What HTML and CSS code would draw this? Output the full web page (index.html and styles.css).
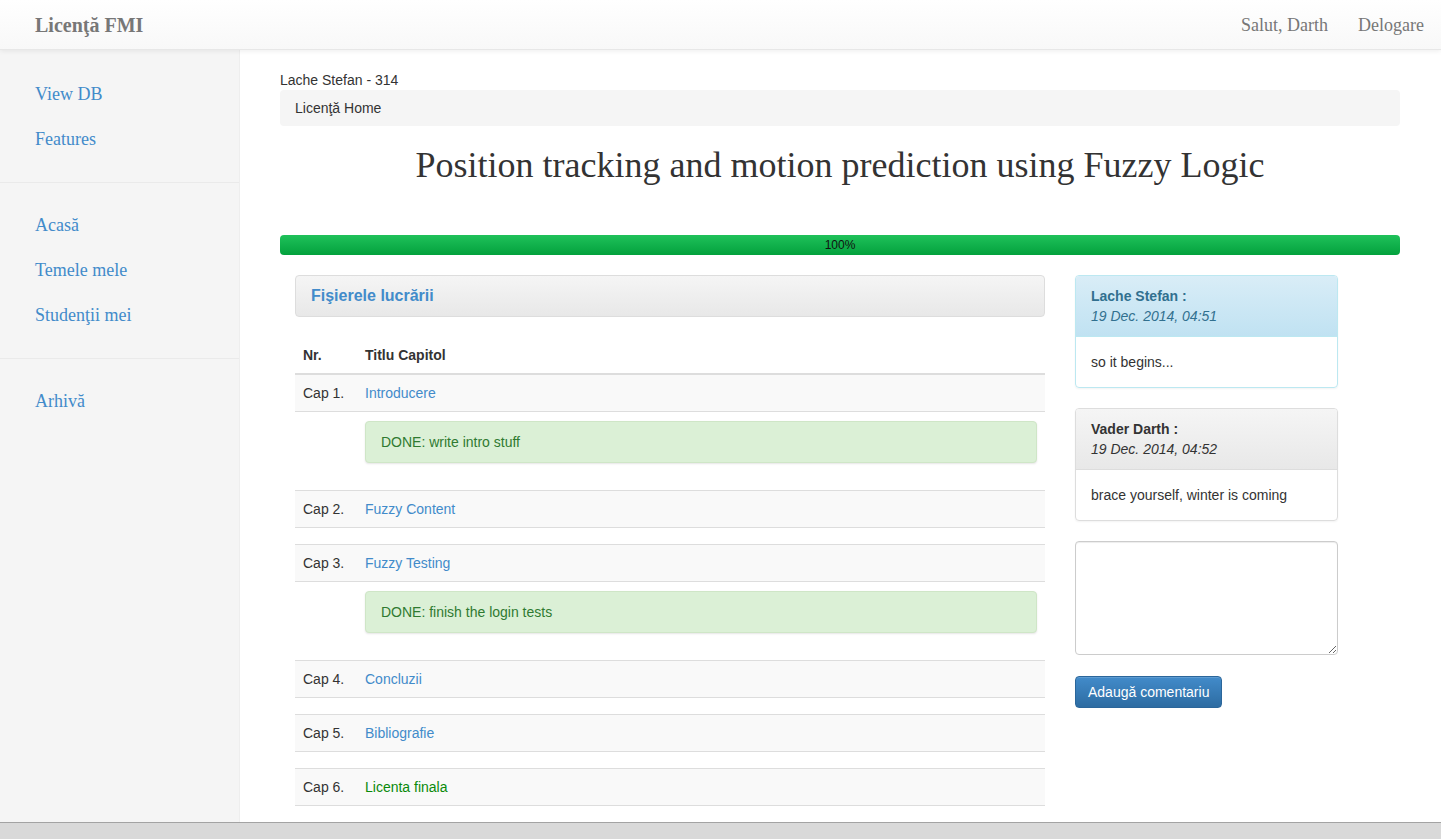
FILE: index.html
```html
<!DOCTYPE html>
<html lang="ro">
<head>
<meta charset="utf-8">
<title>Licenţă FMI</title>
<link rel="stylesheet" href="styles.css">
</head>
<body>
<header class="navbar">
  <a class="brand" href="#">Licenţă FMI</a>
  <nav class="nav-right">
    <a href="#">Salut, Darth</a>
    <a href="#">Delogare</a>
  </nav>
</header>
<div class="layout">
  <aside class="sidebar">
    <ul class="side-group">
      <li><a href="#">View DB</a></li>
      <li><a href="#">Features</a></li>
    </ul>
    <ul class="side-group">
      <li><a href="#">Acasă</a></li>
      <li><a href="#">Temele mele</a></li>
      <li><a href="#">Studenţii mei</a></li>
    </ul>
    <ul class="side-group">
      <li><a href="#">Arhivă</a></li>
    </ul>
  </aside>
  <main class="main">
    <div class="student">Lache Stefan - 314</div>
    <div class="breadcrumb">Licenţă Home</div>
    <h1 class="title">Position tracking and motion prediction using Fuzzy Logic</h1>
    <div class="progress"><div class="progress-bar" style="width:100%">100%</div></div>
    <div class="content">
      <section class="files">
        <div class="files-heading">Fişierele lucrării</div>
        <div class="thead">
          <div class="cell">Nr.</div>
          <div class="cell">Titlu Capitol</div>
        </div>
        <div class="chapter first">
          <div class="crow"><div class="cell">Cap 1.</div><div class="cell"><a href="#">Introducere</a></div></div>
          <div class="note"><div class="alert">DONE: write intro stuff</div></div>
        </div>
        <div class="chapter">
          <div class="crow"><div class="cell">Cap 2.</div><div class="cell"><a href="#">Fuzzy Content</a></div></div>
        </div>
        <div class="chapter">
          <div class="crow"><div class="cell">Cap 3.</div><div class="cell"><a href="#">Fuzzy Testing</a></div></div>
          <div class="note"><div class="alert">DONE: finish the login tests</div></div>
        </div>
        <div class="chapter">
          <div class="crow"><div class="cell">Cap 4.</div><div class="cell"><a href="#">Concluzii</a></div></div>
        </div>
        <div class="chapter">
          <div class="crow"><div class="cell">Cap 5.</div><div class="cell"><a href="#">Bibliografie</a></div></div>
        </div>
        <div class="chapter">
          <div class="crow"><div class="cell">Cap 6.</div><div class="cell"><a class="final" href="#">Licenta finala</a></div></div>
        </div>
      </section>
      <section class="comments">
        <div class="panel panel-info">
          <div class="panel-heading">
            <div class="author">Lache Stefan :</div>
            <div class="date">19 Dec. 2014, 04:51</div>
          </div>
          <div class="panel-body">so it begins...</div>
        </div>
        <div class="panel panel-default">
          <div class="panel-heading">
            <div class="author">Vader Darth :</div>
            <div class="date">19 Dec. 2014, 04:52</div>
          </div>
          <div class="panel-body">brace yourself, winter is coming</div>
        </div>
        <textarea class="comment-box"></textarea>
        <button class="btn-primary" type="button">Adaugă comentariu</button>
      </section>
    </div>
  </main>
</div>
<div class="bottom-bar"></div>
</body>
</html>
```

FILE: styles.css
```css
* { box-sizing: border-box; }

html, body { height: 100%; }

body {
  margin: 0;
  font-family: "Liberation Sans", Arial, sans-serif;
  font-size: 14px;
  line-height: 20px;
  color: #333;
  display: grid;
  grid-template-rows: 50px 1fr 17px;
  overflow: hidden;
  background: #fff;
}

a { text-decoration: none; color: #428bca; }

.navbar {
  position: relative;
  z-index: 2;
  display: flex;
  align-items: center;
  justify-content: space-between;
  background: linear-gradient(to bottom, #ffffff 0%, #f8f8f8 100%);
  border-bottom: 1px solid #e7e7e7;
  box-shadow: 0 1px 5px rgba(0, 0, 0, 0.075);
  padding-right: 2px;
}

.brand {
  font-family: "Liberation Serif", "Times New Roman", serif;
  font-weight: bold;
  font-size: 20px;
  color: #777;
  padding-left: 35px;
}

.nav-right { display: flex; }

.nav-right a {
  font-family: "Liberation Serif", "Times New Roman", serif;
  font-size: 18px;
  color: #777;
  padding: 0 15px;
}

.layout {
  display: flex;
  min-height: 0;
}

.sidebar {
  width: 240px;
  flex: none;
  background: #f5f5f5;
  border-right: 1px solid #eee;
  padding-top: 22px;
}

.side-group {
  list-style: none;
  margin: 0;
  padding: 0 0 20px;
}

.side-group + .side-group {
  border-top: 1px solid #eaeaea;
  padding-top: 20px;
}

.side-group a {
  display: block;
  padding: 10px 35px;
  font-family: "Liberation Serif", "Times New Roman", serif;
  font-size: 18px;
  line-height: 25px;
  color: #428bca;
}

.main {
  flex: 1;
  min-width: 0;
  padding: 20px 41px 0 40px;
  overflow: hidden;
}

.breadcrumb {
  background: #f5f5f5;
  border-radius: 4px;
  padding: 8px 15px;
}

.title {
  font-family: "Liberation Serif", "Times New Roman", serif;
  font-weight: normal;
  font-size: 36px;
  line-height: 1.1;
  text-align: center;
  margin: 20px 0 49px;
  color: #333;
}

.progress {
  height: 20px;
  border-radius: 4px;
  background: #f5f5f5;
  overflow: hidden;
  margin-bottom: 20px;
}

.progress-bar {
  height: 100%;
  background: linear-gradient(to bottom, #1fc15a 0%, #03a13d 100%);
  font-size: 12px;
  line-height: 20px;
  text-align: center;
  color: #111;
}

.content {
  display: flex;
  gap: 30px;
  padding-left: 15px;
  align-items: flex-start;
}

.files { width: 750px; flex: none; }

.files-heading {
  border: 1px solid #ddd;
  border-radius: 4px;
  background: linear-gradient(to bottom, #f5f5f5 0%, #e8e8e8 100%);
  padding: 10px 15px;
  font-size: 16px;
  font-weight: bold;
  color: #428bca;
  margin-bottom: 20px;
}

.thead, .crow {
  display: grid;
  grid-template-columns: 62px 1fr;
}

.cell { padding: 8px; }

.thead {
  font-weight: bold;
  border-bottom: 2px solid #ddd;
}

.chapter { margin-bottom: 16px; }

.crow {
  background: #f9f9f9;
  border-top: 1px solid #ddd;
  border-bottom: 1px solid #ddd;
}

.chapter.first .crow { border-top: none; }

.final { color: #0a8a0a; }

.note { padding: 9px 8px 11px 70px; }

.alert {
  background: #dbf0d6;
  border: 1px solid #cfe6c7;
  border-radius: 4px;
  padding: 10px 15px;
  line-height: 20px;
  color: #2f7a31;
  box-shadow: 0 1px 2px rgba(0, 0, 0, 0.1);
}

.comments {
  width: 263px;
  flex: none;
  display: flex;
  flex-direction: column;
  align-items: flex-start;
}

.panel {
  width: 100%;
  border: 1px solid #ddd;
  border-radius: 4px;
  margin-bottom: 20px;
  overflow: hidden;
  box-shadow: 0 1px 2px rgba(0, 0, 0, 0.05);
}

.panel-heading {
  padding: 10px 15px;
  border-bottom: 1px solid #ddd;
}

.author { font-weight: bold; }
.date { font-style: italic; }

.panel-info { border-color: #bce8f1; }
.panel-info .panel-heading {
  background: linear-gradient(to bottom, #d9edf7 0%, #c0e2f2 100%);
  border-bottom-color: #bce8f1;
  color: #31708f;
}

.panel-default .panel-heading {
  background: linear-gradient(to bottom, #f5f5f5 0%, #e8e8e8 100%);
}

.panel-body { padding: 15px; }

.comment-box {
  display: block;
  width: 263px;
  height: 114px;
  border: 1px solid #ccc;
  border-radius: 4px;
  box-shadow: inset 0 1px 1px rgba(0, 0, 0, 0.075);
  margin: 0 0 21px;
  font-family: "Liberation Sans", Arial, sans-serif;
  font-size: 14px;
}

.btn-primary {
  background: linear-gradient(to bottom, #428bca 0%, #2d6ca2 100%);
  border: 1px solid #2b669a;
  border-radius: 4px;
  color: #fff;
  font-family: "Liberation Sans", Arial, sans-serif;
  font-size: 14px;
  line-height: 20px;
  padding: 5px 12px;
  box-shadow: inset 0 1px 0 rgba(255, 255, 255, 0.15);
}

.bottom-bar {
  background: #d9d9d9;
  border-top: 1px solid #a3a3a3;
}
```
